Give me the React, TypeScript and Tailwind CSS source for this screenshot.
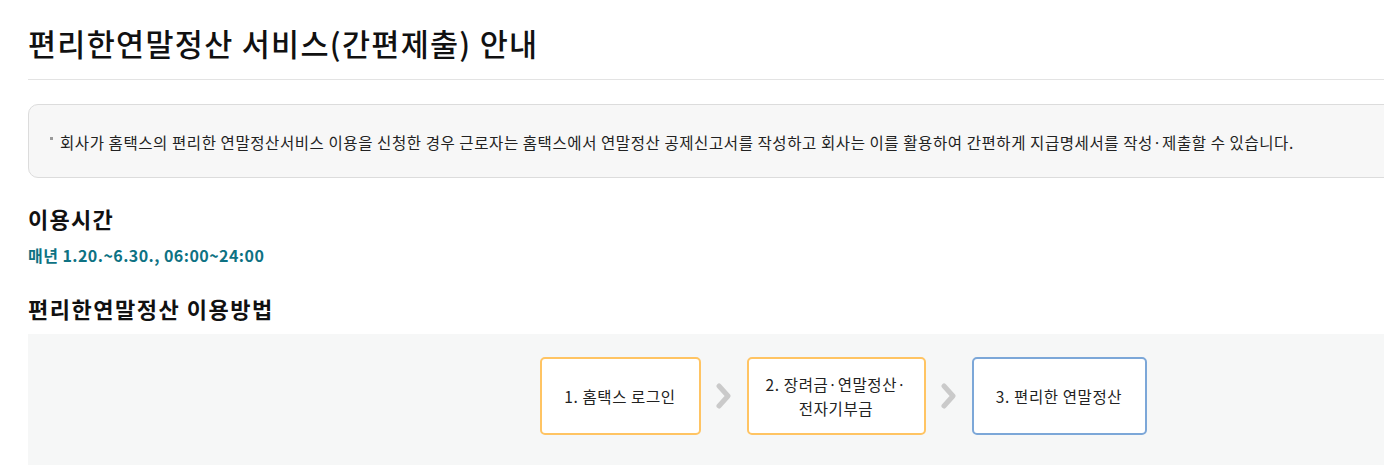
import React from "react";

const font = { fontFamily: '"Noto Sans CJK KR", "Noto Sans", sans-serif' };

function Chevron() {
  return (
    <svg width="16" height="28" viewBox="0 0 16 28" className="shrink-0">
      <path d="M3 4 L12 14 L3 24" fill="none" stroke="#cacaca" strokeWidth="5" strokeLinecap="round" strokeLinejoin="round" />
    </svg>
  );
}

export default function App() {
  return (
    <div className="bg-white min-h-[470px] overflow-hidden" style={font}>
      <div className="ml-[28px] w-[1630px]">
        <h1 className="pt-[24px] pb-[16px] text-[30.5px] leading-[39px] font-medium text-[#111] tracking-[1.3px] border-b border-[#e3e3e3]">
          편리한연말정산 서비스(간편제출) 안내
        </h1>
        <div className="mt-[24px] h-[74px] rounded-[10px] border border-[#dcdcdc] bg-[#f7f7f7] flex items-center pl-[21px] pt-[3px]">
          <span className="w-[3px] h-[3px] bg-[#9a9a9a] mr-[7px] -mt-[9px]"></span>
          <p className="text-[15.5px] text-[#222] tracking-[0.58px]">
            회사가 홈택스의 편리한 연말정산서비스 이용을 신청한 경우 근로자는 홈택스에서 연말정산 공제신고서를 작성하고 회사는 이를 활용하여 간편하게 지급명세서를 작성·제출할 수 있습니다.
          </p>
        </div>
        <h2 className="mt-[25px] text-[22px] leading-[30px] font-bold text-[#111] tracking-[1.3px]">이용시간</h2>
        <p className="mt-[12px] text-[16px] leading-[20px] font-bold text-[#0e7283] tracking-[0.45px]">매년 1.20.~6.30., 06:00~24:00</p>
        <h2 className="mt-[28px] text-[22px] leading-[30px] font-bold text-[#111] tracking-[1.5px]">편리한연말정산 이용방법</h2>
        <div className="mt-[11px] bg-[#f6f7f7] pt-[23px] pb-[30px] flex items-center justify-center gap-[15px]">
          <div className="w-[161px] h-[78px] rounded-[5px] border-2 border-[#ffc463] bg-white flex items-center justify-center text-center text-[15.5px] leading-[24px] text-[#222] tracking-[0.6px]">
            1. 홈택스 로그인
          </div>
          <Chevron />
          <div className="w-[179px] h-[78px] rounded-[5px] border-2 border-[#ffc463] bg-white flex items-center justify-center text-center text-[15.5px] leading-[24px] text-[#222] tracking-[0.6px]">
            2. 장려금·연말정산·<br />전자기부금
          </div>
          <Chevron />
          <div className="w-[175px] h-[78px] rounded-[5px] border-2 border-[#7ca7d8] bg-white flex items-center justify-center text-center text-[15.5px] leading-[24px] text-[#222] tracking-[0.6px]">
            3. 편리한 연말정산
          </div>
        </div>
      </div>
    </div>
  );
}
